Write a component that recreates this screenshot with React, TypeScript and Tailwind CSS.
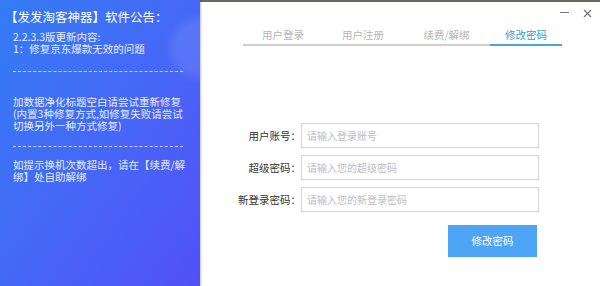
import React from "react";

const font = { fontFamily: '"Noto Sans CJK SC", "Noto Sans", sans-serif' };

function Dash() {
  return <div className="mr-[17px] h-0 border-t border-dashed border-white/70" />;
}

export default function App() {
  const tabs = [
    { t: "用户登录", w: "w-[80px]" },
    { t: "用户注册", w: "w-[80px]" },
    { t: "续费/解绑", w: "w-[87px]" },
    { t: "修改密码", w: "w-[72px]", active: true },
  ];
  const fields = [
    { l: "用户账号", p: "请输入登录账号" },
    { l: "超级密码", p: "请输入您的超级密码" },
    { l: "新登录密码", p: "请输入您的新登录密码" },
  ];
  return (
    <div className="flex h-[286px] w-[600px] overflow-hidden bg-white" style={font}>
      <div className="relative h-full w-[200px] shrink-0 overflow-hidden bg-gradient-to-br from-[#327cf4] to-[#5250f8] shadow-[1px_0_2px_rgba(0,0,0,0.25)]">
        <div className="absolute -right-[40px] top-[18px] h-[60px] w-[70px] rounded-full bg-white/10 blur-[4px]" />
        <div className="relative pl-[5px] pt-[9px] text-[12.5px] leading-[16px] text-white">【发发淘客神器】软件公告：</div>
        <div className="relative pl-[13px] text-[10.5px] leading-[12px] text-[#e6ecff]">
          <div className="mt-[6px]">2.2.3.3版更新内容:</div>
          <div>1：修复京东爆款无效的问题</div>
          <div className="mt-[16px]"><Dash /></div>
          <div className="mt-[24px]">加数据净化标题空白请尝试重新修复</div>
          <div>(内置3种修复方式,如修复失败请尝试</div>
          <div>切换另外一种方式修复)</div>
          <div className="mt-[14px]"><Dash /></div>
          <div className="mt-[12px]">如提示换机次数超出，请在【续费/解</div>
          <div>绑】处自助解绑</div>
        </div>
      </div>
      <div className="flex h-full flex-1 flex-col">
        <div className="h-[2px] bg-[#6a6560]" />
        <div className="flex h-[18px] items-center justify-end gap-[14px] pr-[5px] pt-[4px] text-[#666]">
          <div className="mt-[-2px] h-px w-[9px] bg-[#777]" />
          <svg width="9" height="9" viewBox="0 0 9 9" className="mr-[3px]">
            <path d="M1 1L8 8M8 1L1 8" stroke="#777" strokeWidth="1.2" />
          </svg>
        </div>
        <div className="ml-[43px] mt-[9px] flex w-[319px] border-b-2 border-[#cfcfcf]">
          {tabs.map((t) => (
            <div
              key={t.t}
              className={`${t.w} -mb-[2px] flex h-[17px] justify-center text-[10.5px] leading-[12px] ${
                t.active ? "border-b-2 border-[#4ba7d6] text-[#3c9ad6]" : "text-[#b5b5b5]"
              }`}
            >
              {t.t}
            </div>
          ))}
        </div>
        <div className="mt-[77px] flex flex-col gap-[7px]">
          {fields.map((f) => (
            <div key={f.l} className="flex items-center">
              <div className="w-[101px] text-right text-[10.5px] text-[#333]">{f.l}：</div>
              <div className="flex h-[25px] w-[238px] items-center border border-[#d6d6d6] pl-[5px] text-[10px] text-[#bdbdbd]">
                {f.p}
              </div>
            </div>
          ))}
        </div>
        <div className="ml-[248px] mt-[13px] flex h-[32px] w-[89px] items-center justify-center bg-[#4ea5f6] text-[10.5px] text-white">
          修改密码
        </div>
      </div>
    </div>
  );
}
